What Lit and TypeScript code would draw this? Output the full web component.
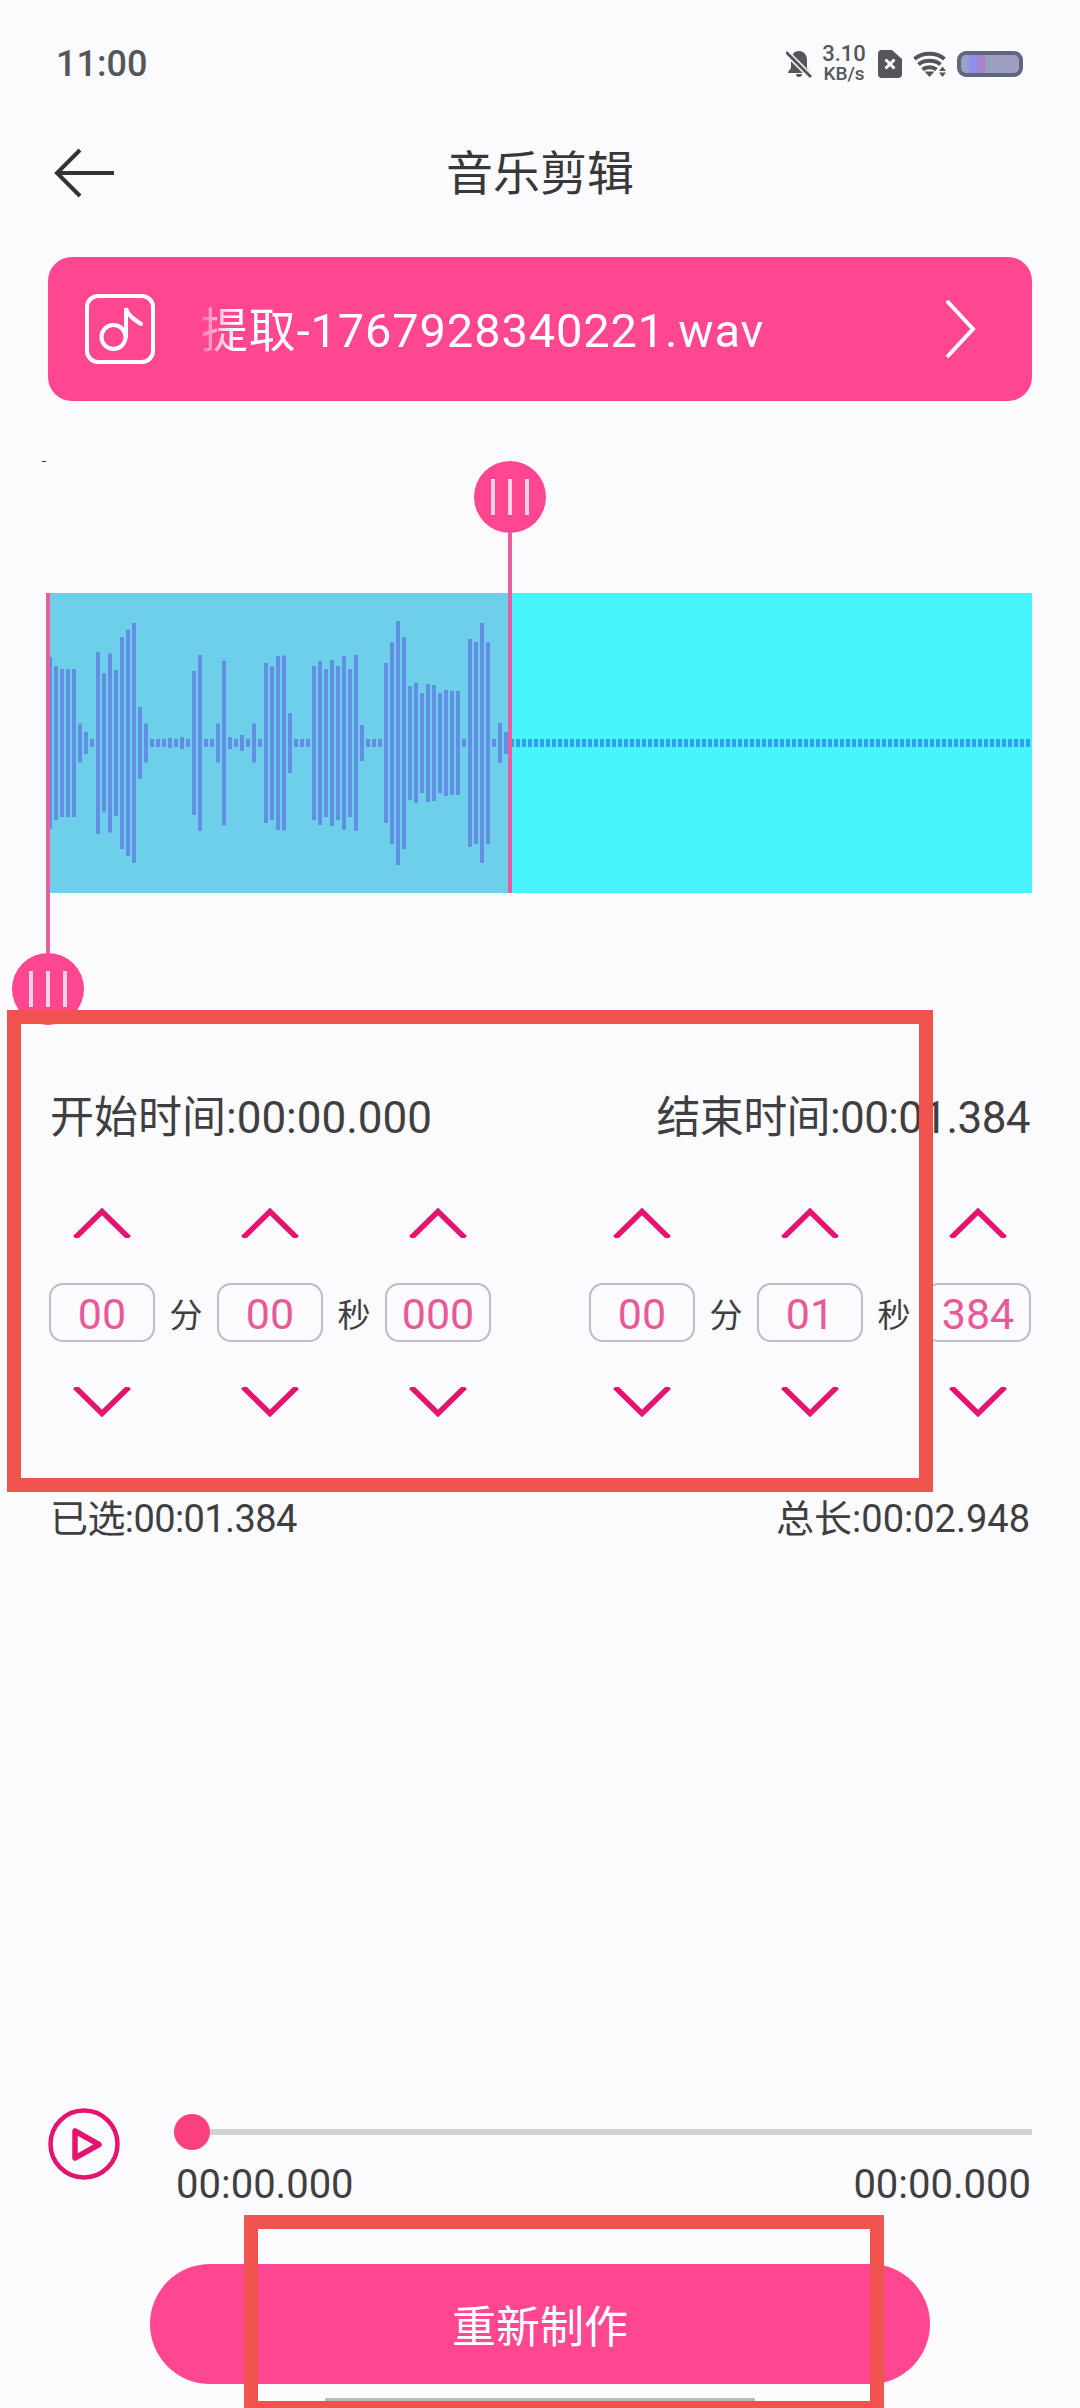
import { LitElement, html, svg, css } from "lit";
import { customElement } from "lit/decorators.js";

/** Full bar heights in px, left to right; anything past the list is the flat 8px tail */
const BARS = [
  172, 154, 148, 148, 148, 39, 22, 8, 182, 139, 179, 146, 212, 226, 240, 72, 39, 8, 8, 8, 10, 8, 12, 8,
  144, 176, 8, 8, 39, 165, 12, 8, 16, 8, 39, 8, 160, 154, 174, 175, 60, 8, 8, 8, 154, 164, 148, 166, 154,
  174, 148, 176, 36, 8, 8, 8, 160, 202, 244, 212, 114, 120, 100, 118, 116, 100, 106, 104, 104, 8, 208,
  202, 240, 202, 8, 40, 22,
];
const WAVE_WIDTH = 984;
const BAR_PITCH = 6;
const SELECTED_END = 462;

const START_FIELDS = [
  { value: "00", unit: "分" },
  { value: "00", unit: "秒" },
  { value: "000", unit: "" },
];
const END_FIELDS = [
  { value: "00", unit: "分" },
  { value: "01", unit: "秒" },
  { value: "384", unit: "" },
];

@customElement("app-root")
export class AppRoot extends LitElement {
  static override styles = css`
    :host {
      display: flex;
      flex-direction: column;
      position: relative;
      width: 1080px;
      height: 2408px;
      overflow: hidden;
      background: #fbfbfd;
      color: #3f3f42;
      font-family: Roboto, "Noto Sans CJK SC", sans-serif;
    }

    .status {
      display: flex;
      align-items: center;
      height: 126px;
      flex-shrink: 0;
      padding: 2px 57px 0 56px;
      box-sizing: border-box;
      color: #55565c;
    }
    .clock {
      font-size: 36px;
      font-weight: 500;
      margin-right: auto;
    }
    .speed {
      display: flex;
      flex-direction: column;
      align-items: center;
      width: 40px;
      margin: 0 14px 0 12px;
      font-size: 22px;
      font-weight: 500;
      line-height: 20px;
    }
    .speed span + span {
      font-size: 19px;
    }
    .sim {
      margin-right: 11px;
    }
    .wifi {
      margin-right: 11px;
    }
    .battery {
      width: 66px;
      height: 26px;
      box-sizing: border-box;
      border: 4px solid #5f6680;
      border-radius: 9px;
      background: linear-gradient(
        to right,
        #9a9fc4 0 8px,
        #8f8fec 8px 16px,
        #a882c6 16px 24px,
        #9a9fc0 24px
      );
    }

    .header {
      display: grid;
      grid-template-columns: 1fr auto 1fr;
      align-items: center;
      height: 94px;
      flex-shrink: 0;
    }
    .back {
      margin-left: 52px;
      display: block;
    }
    .title {
      padding-top: 2px;
      font-size: 47px;
      line-height: 60px;
      color: #38383a;
    }

    .file {
      display: flex;
      align-items: center;
      height: 144px;
      flex-shrink: 0;
      margin: 37px 48px 0;
      padding: 0 56px 0 37px;
      box-sizing: border-box;
      border-radius: 24px;
      background: #ff4791;
      color: #fff;
    }
    .file-name {
      margin-left: 46px;
      margin-right: auto;
      padding-top: 4px;
      font-size: 47px;
      letter-spacing: 0.85px;
      line-height: 60px;
      -webkit-mask-image: linear-gradient(to right, rgba(0, 0, 0, 0.25), #000 34px);
      mask-image: linear-gradient(to right, rgba(0, 0, 0, 0.25), #000 34px);
    }

    .editor {
      position: relative;
      height: 624px;
      flex-shrink: 0;
    }
    .speck {
      position: absolute;
      left: 42px;
      top: 60px;
      width: 4px;
      height: 1px;
      background: #333;
    }
    .wave {
      position: relative;
      display: block;
      width: 984px;
      height: 300px;
      margin: 192px 48px 0;
      background: #48f5ff;
    }
    .wave svg {
      position: absolute;
      left: 0;
      top: 0;
    }
    .selected {
      position: absolute;
      left: 0;
      top: 0;
      width: 462px;
      height: 300px;
      background: #6dcfea;
    }
    .line {
      position: absolute;
      width: 4px;
      margin-left: -2px;
      background: #e85e9f;
    }
    .line.end {
      left: 510px;
      top: 132px;
      height: 360px;
    }
    .line.start {
      left: 48px;
      top: 192px;
      height: 360px;
    }
    .handle {
      position: absolute;
      display: flex;
      align-items: center;
      justify-content: center;
      gap: 13px;
      width: 72px;
      height: 72px;
      border-radius: 50%;
      background: #ff4791;
    }
    .handle.end {
      left: 474px;
      top: 60px;
    }
    .handle.start {
      left: 12px;
      top: 552px;
    }
    .handle i {
      display: block;
      width: 4px;
      height: 36px;
      background: #ffd3e4;
    }

    .times {
      display: flex;
      justify-content: space-between;
      margin: 67px 50px 0;
      font-size: 44px;
      line-height: 52px;
    }
    .tight {
      letter-spacing: -0.6px;
    }

    .pickers {
      display: flex;
      justify-content: space-between;
      margin: 64px 49px 0;
    }
    .group {
      display: flex;
    }
    .field {
      display: flex;
      flex-direction: column;
      align-items: center;
      gap: 45px;
      width: 106px;
    }
    .chevron {
      display: block;
      fill: none;
      stroke: #e5146f;
      stroke-width: 5.500;
    }
    .box {
      display: flex;
      align-items: center;
      justify-content: center;
      width: 106px;
      height: 59px;
      box-sizing: border-box;
      border: 2px solid #bcbdc6;
      border-radius: 14px;
      color: #e8589a;
      font-size: 43px;
      padding-top: 2px;
    }
    .unit {
      align-self: center;
      width: 62px;
      text-align: center;
      font-size: 33px;
    }

    .summary {
      display: flex;
      justify-content: space-between;
      margin: 79px 50px 0;
      font-size: 38px;
      line-height: 46px;
    }

    .bottom {
      margin-top: auto;
      padding-bottom: 24px;
    }
    .player {
      display: flex;
      gap: 54px;
      margin: 0 48px;
    }
    .play {
      display: block;
      flex-shrink: 0;
      fill: none;
      stroke: #e5146f;
    }
    .progress {
      flex: 1;
      padding-top: 6px;
    }
    .slider {
      position: relative;
      display: flex;
      align-items: center;
      height: 36px;
    }
    .track {
      flex: 1;
      height: 6px;
      background: #d2d2d2;
    }
    .thumb {
      position: absolute;
      left: 0;
      top: 0;
      width: 36px;
      height: 36px;
      border-radius: 50%;
      background: #fb4080;
    }
    .clock-row {
      display: flex;
      justify-content: space-between;
      margin-top: 13px;
      padding: 0 1px 0 2px;
      font-size: 40px;
      line-height: 44px;
    }
    .remake {
      display: flex;
      align-items: center;
      justify-content: center;
      width: 780px;
      height: 120px;
      margin: 57px auto 0;
      border-radius: 60px;
      background: #ff4791;
      color: #fff;
      font-size: 44px;
    }

    .home {
      position: absolute;
      left: 325px;
      top: 2398px;
      width: 430px;
      height: 6px;
      background: #c0b8b8;
    }
    .mark {
      position: absolute;
      box-sizing: border-box;
      border: 14px solid #f1544e;
    }
    .mark.a {
      left: 7px;
      top: 1010px;
      width: 926px;
      height: 482px;
    }
    .mark.b {
      left: 244px;
      top: 2215px;
      width: 640px;
      height: 200px;
    }
  `;

  private _renderBars() {
    const total = Math.ceil(WAVE_WIDTH / BAR_PITCH);
    const bars = [];
    for (let i = 0; i < total; i++) {
      const h = BARS[i] ?? 8;
      const x = i * BAR_PITCH;
      const fill = x < SELECTED_END ? "#628ee4" : "#2f9ff0";
      bars.push(svg`<rect x=${x} y=${150 - h / 2} width="4" height=${h} fill=${fill}></rect>`);
    }
    return html`<svg width="984" height="300" viewBox="0 0 984 300">${bars}</svg>`;
  }

  private _renderGroup(fields: { value: string; unit: string }[]) {
    return html`
      <div class="group">
        ${fields.map(
          (f) => html`
            <div class="field">
              <svg class="chevron" width="58" height="30" viewBox="0 0 58 30">
                <polyline points="2,30 29,3.500 56,30"></polyline>
              </svg>
              <div class="box">${f.value}</div>
              <svg class="chevron" width="58" height="30" viewBox="0 0 58 30">
                <polyline points="2,0 29,26.500 56,0"></polyline>
              </svg>
            </div>
            ${f.unit ? html`<div class="unit">${f.unit}</div>` : null}
          `
        )}
      </div>
    `;
  }

  override render() {
    return html`
      <div class="status">
        <span class="clock">11:00</span>
        <svg width="26" height="28" viewBox="0 0 26 28">
          <path
            fill="#55565c"
            d="M13 1c-5 0-8 4-8 9v8l-3 4v1h22v-1l-3-4v-8c0-5-3-9-8-9zM10 24a3 3 0 0 0 6 0z"
          ></path>
          <path stroke="#fbfbfd" stroke-width="6" d="M1 3l24 24"></path>
          <path stroke="#55565c" stroke-width="3" d="M0 2l25 25"></path>
        </svg>
        <div class="speed"><span>3.10</span><span>KB/s</span></div>
        <svg class="sim" width="24" height="28" viewBox="0 0 24 28">
          <path fill="#55565c" d="M4 0h10l10 9v15a4 4 0 0 1-4 4H4a4 4 0 0 1-4-4V4a4 4 0 0 1 4-4z"></path>
          <path stroke="#fbfbfd" stroke-width="3" d="M7.500 9.500l9 9M16.500 9.500l-9 9"></path>
        </svg>
        <svg class="wifi" width="33" height="26" viewBox="0 0 33 26">
          <g fill="none" stroke="#55565c" stroke-width="3.800">
            <path d="M1.500 8c7.500-7 22.500-7 30 0"></path>
            <path d="M5.500 13.500c5.500-5 16.500-5 22 0"></path>
            <path d="M9.500 18.500c3.500-3 10.500-3 14 0"></path>
          </g>
          <path fill="#55565c" d="M11.500 20.500h10l-5 5.500zM26 20l3.500-4.500 3.500 4.500zM26 21.500h7l-3.500 4.500z"></path>
        </svg>
        <div class="battery"></div>
      </div>

      <div class="header">
        <svg class="back" width="64" height="50" viewBox="0 0 64 50" fill="none" stroke="#333" stroke-width="4">
          <path d="M4 25h58M28 2L5 25l23 23"></path>
        </svg>
        <div class="title">音乐剪辑</div>
      </div>

      <div class="file">
        <svg width="70" height="70" viewBox="0 0 70 70" fill="none" stroke="#fff" stroke-width="4">
          <rect x="2" y="2" width="66" height="66" rx="11"></rect>
          <circle cx="28.500" cy="43" r="12"></circle>
          <path d="M41 43V14c1 6 6 10 15 16" stroke-linecap="round"></path>
        </svg>
        <div class="file-name">提取-1767928340221.wav</div>
        <svg width="32" height="60" viewBox="0 0 32 60" fill="none" stroke="#fff" stroke-width="4">
          <path d="M3 2l26 28L3 58"></path>
        </svg>
      </div>

      <div class="editor">
        <div class="speck"></div>
        <div class="wave">
          <div class="selected"></div>
          ${this._renderBars()}
        </div>
        <div class="line end"></div>
        <div class="line start"></div>
        <div class="handle end"><i></i><i></i><i></i></div>
        <div class="handle start"><i></i><i></i><i></i></div>
      </div>

      <div class="times">
        <span>开始时间:00:00.000</span>
        <span class="tight">结束时间:00:01.384</span>
      </div>

      <div class="pickers">${this._renderGroup(START_FIELDS)} ${this._renderGroup(END_FIELDS)}</div>

      <div class="summary">
        <span class="tight">已选:00:01.384</span>
        <span>总长:00:02.948</span>
      </div>

      <div class="bottom">
        <div class="player">
          <svg class="play" width="72" height="72" viewBox="0 0 72 72">
            <circle cx="36" cy="36" r="33.500" stroke-width="4.500"></circle>
            <path d="M27 23v27l24-13.500z" stroke-width="5.500" stroke-linejoin="round"></path>
          </svg>
          <div class="progress">
            <div class="slider">
              <div class="track"></div>
              <div class="thumb"></div>
            </div>
            <div class="clock-row">
              <span>00:00.000</span>
              <span>00:00.000</span>
            </div>
          </div>
        </div>
        <div class="remake">重新制作</div>
      </div>

      <div class="home"></div>
      <div class="mark a"></div>
      <div class="mark b"></div>
    `;
  }
}

declare global {
  interface HTMLElementTagNameMap {
    "app-root": AppRoot;
  }
}
